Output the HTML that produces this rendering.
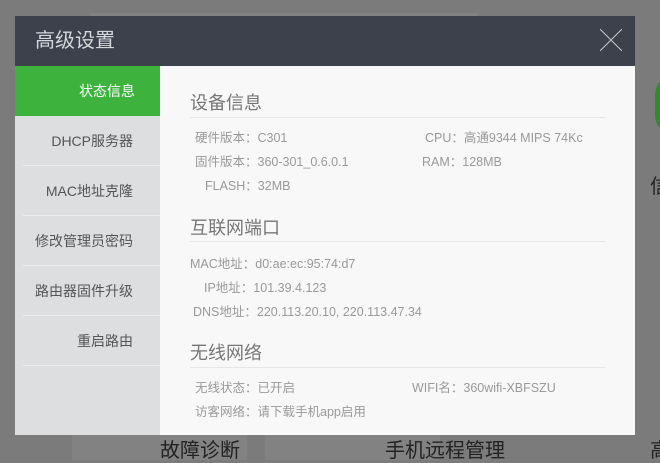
<!DOCTYPE html>
<html><head><meta charset="utf-8"><style>
*{margin:0;padding:0;box-sizing:border-box}
body{width:660px;height:460px;overflow:hidden;background:#7b7b7b;font-family:"Liberation Sans","Noto Sans CJK SC",sans-serif;position:relative}
.bgp{position:absolute;background:#828282}
.m{position:absolute;left:15px;top:16px;width:620px;height:419px;background:#f8f8f8}
.hd{position:absolute;left:0;top:0;width:620px;height:50px;background:#3c414c;color:#d5d7da;font-size:20px;line-height:50px;padding-left:20px}
.x{position:absolute;right:13px;top:13px;width:22px;height:22px}
.sb{position:absolute;left:0;top:50px;width:145px;height:369px;background:#dcdee0}
.it{height:50px;line-height:50px;text-align:right;padding-right:27px;font-size:14px;color:#555;border-bottom:1px solid #eceef0;margin-left:8px;white-space:nowrap}
.it.a{background:#3db33d;color:#fff;margin-left:0;border:none;padding-right:25px}
.t{position:absolute;left:175px;font-size:18px;color:#777}
.ln{position:absolute;left:175px;width:415px;height:1px;background:#e6e6e6}
.r{position:absolute;font-size:12.5px;color:#999;white-space:nowrap}
</style></head><body>
<div class="bgp" style="left:90px;top:13px;width:220px;height:5px"></div>
<div class="bgp" style="left:253px;top:13px;width:225px;height:5px"></div>
<div style="position:absolute;left:655px;top:75px;width:40px;height:60px;border-radius:30px;background:#2e8b2e"></div>
<div style="position:absolute;left:650px;top:170px;font-size:20px;color:#222">信</div>
<div class="bgp" style="left:72px;top:435px;width:175px;height:25px"></div>
<div class="bgp" style="left:265px;top:435px;width:175px;height:25px"></div>
<div style="position:absolute;left:160px;top:434px;font-size:20px;color:#222">故障诊断</div>
<div style="position:absolute;left:385px;top:434px;font-size:20px;color:#222">手机远程管理</div>
<div style="position:absolute;left:650px;top:434px;font-size:20px;color:#222">高</div>
<div class="m">
<div class="hd">高级设置<svg class="x" viewBox="0 0 22 22"><path d="M0 0L22 22M22 0L0 22" stroke="#c8cacd" stroke-width="1"/></svg></div>
<div class="sb">
<div class="it a">状态信息</div>
<div class="it">DHCP服务器</div>
<div class="it">MAC地址克隆</div>
<div class="it">修改管理员密码</div>
<div class="it">路由器固件升级</div>
<div class="it">重启路由</div>
</div>
<div class="t" style="top:73px">设备信息</div>
<div class="ln" style="top:101px"></div>
<div class="r" style="left:180px;top:111px">硬件版本：C301</div>
<div class="r" style="left:180px;top:135px">固件版本：360-301_0.6.0.1</div>
<div class="r" style="left:190px;top:159px">FLASH：32MB</div>
<div class="r" style="left:410px;top:111px">CPU：高通9344 MIPS 74Kc</div>
<div class="r" style="left:407px;top:135px">RAM：128MB</div>
<div class="t" style="top:198px">互联网端口</div>
<div class="ln" style="top:225px"></div>
<div class="r" style="left:175px;top:237px">MAC地址：d0:ae:ec:95:74:d7</div>
<div class="r" style="left:189px;top:261px">IP地址：101.39.4.123</div>
<div class="r" style="left:178px;top:285px">DNS地址：220.113.20.10, 220.113.47.34</div>
<div class="t" style="top:323px">无线网络</div>
<div class="ln" style="top:351px"></div>
<div class="r" style="left:180px;top:361px">无线状态：已开启</div>
<div class="r" style="left:180px;top:385px">访客网络：请下载手机app启用</div>
<div class="r" style="left:397px;top:361px">WIFI名：360wifi-XBFSZU</div>
</div>
</body></html>
